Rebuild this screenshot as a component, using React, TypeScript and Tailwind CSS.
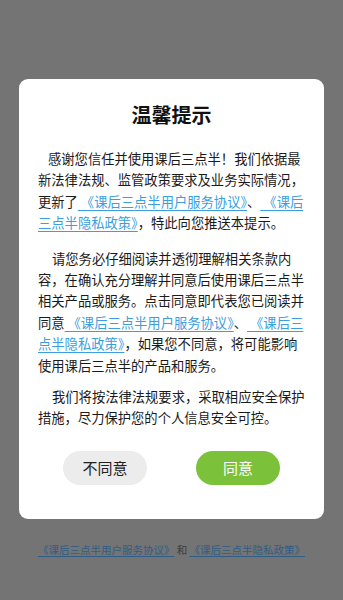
import React from 'react'

const font = { fontFamily: '"Noto Sans CJK SC", "Noto Sans", sans-serif' }

function Link({ children }: { children: React.ReactNode }) {
  return <span className="text-[#3a9ee0] underline decoration-1 underline-offset-[3px]">{children}</span>
}

export default function App() {
  return (
    <div className="min-h-[600px] w-[343px] bg-[#747474] pt-[79px]" style={font}>
      <div className="mx-[19px] rounded-[9px] bg-white px-[19px] pt-[22px] pb-[34px]">
        <h1 className="text-center text-[20px] font-bold leading-[28px] text-[#111]">温馨提示</h1>

        <div className="mt-[19px] text-[13.3px] leading-[21.4px] text-[#1a1a1a] whitespace-nowrap">
          <p className="pl-[10px]">感谢您信任并使用课后三点半！我们依据最</p>
          <p>新法律法规、监管政策要求及业务实际情况，</p>
          <p>
            更新了<Link> 《课后三点半用户服务协议》</Link>、<Link> 《课后</Link>
          </p>
          <p>
            <Link>三点半隐私政策》</Link>，特此向您推送本提示。
          </p>

          <p className="mt-[14px] pl-[14px]">请您务必仔细阅读并透彻理解相关条款内</p>
          <p>容，在确认充分理解并同意后使用课后三点半</p>
          <p>相关产品或服务。点击同意即代表您已阅读并</p>
          <p>
            同意<Link> 《课后三点半用户服务协议》</Link>、<Link> 《课后三</Link>
          </p>
          <p>
            <Link>点半隐私政策》</Link>，如果您不同意，将可能影响
          </p>
          <p>使用课后三点半的产品和服务。</p>

          <p className="mt-[10px] pl-[14px]">我们将按法律法规要求，采取相应安全保护</p>
          <p>措施，尽力保护您的个人信息安全可控。</p>
        </div>

        <div className="mt-[22px] flex justify-center gap-[49px]">
          <button className="h-[34px] w-[84px] rounded-full bg-[#ececec] text-[15px] text-[#222]">不同意</button>
          <button className="h-[34px] w-[84px] rounded-full bg-[#7cc13a] text-[15px] text-white">同意</button>
        </div>
      </div>

      <div className="mt-[24px] text-center text-[10.5px] leading-[14px] whitespace-nowrap">
        <span className="text-[#2f5d86] underline underline-offset-2"> 《课后三点半用户服务协议》</span>
        <span className="text-[#3c3c3c]"> 和 </span>
        <span className="text-[#2f5d86] underline underline-offset-2">《课后三点半隐私政策》 </span>
      </div>
    </div>
  )
}
